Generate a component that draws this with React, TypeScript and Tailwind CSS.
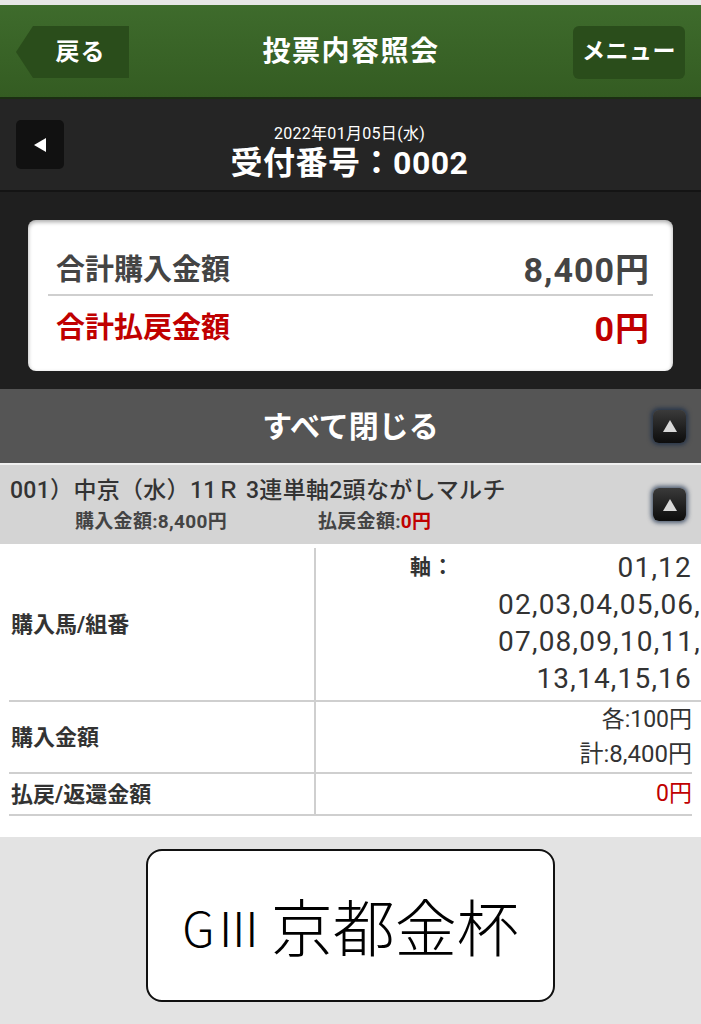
import React from "react";

const jp = "font-['Roboto','Noto_Sans_CJK_JP',sans-serif]";

function UpButton() {
  return (
    <div className="grid h-[33px] w-[33px] place-items-center rounded-[6px] bg-gradient-to-b from-[#3a3a3a] to-[#0d0d0d] shadow-[0_0_4px_2px_rgba(20,40,70,0.7)]">
      <svg width="16" height="14" viewBox="0 0 16 14">
        <path d="M8 1 L15 13 L1 13 Z" fill="#d8d8d8" />
      </svg>
    </div>
  );
}

export default function App() {
  return (
    <div className={`flex w-[701px] flex-col ${jp}`}>
      <div className="h-[5px] bg-[#e6e6e6]" />

      {/* header */}
      <header className="flex h-[94px] items-center justify-between border-b-2 border-[#1b2e12] bg-gradient-to-b from-[#3e6b2c] to-[#345c22] px-[16px] pt-[2px]">
        <button className="flex h-[52px] w-[113px] items-center justify-center bg-[#2a4d1b] pl-[16px] text-[24px] font-bold tracking-[1px] text-white [clip-path:polygon(17px_0,100%_0,100%_100%,17px_100%,0_50%)]">
          戻る
        </button>
        <h1 className="text-[28px] font-bold tracking-[1.5px] text-white">投票内容照会</h1>
        <button className="flex h-[53px] w-[112px] items-center justify-center rounded-[6px] bg-[#2a4d1b] text-[23px] font-bold tracking-[0.5px] text-white">
          メニュー
        </button>
      </header>

      {/* receipt number bar */}
      <div className="flex h-[93px] items-center border-b-2 border-[#141414] bg-[#252525] px-[16px]">
        <div className="grid h-[49px] w-[48px] place-items-center rounded-[5px] bg-[#111]">
          <svg width="14" height="16" viewBox="0 0 14 16">
            <path d="M1 8 L13 1 L13 15 Z" fill="#fff" />
          </svg>
        </div>
        <div className="-ml-[48px] flex flex-1 flex-col items-center pr-[2px] pt-[16px] text-white">
          <div className="text-[16px] leading-[20px] tracking-[0.3px]">2022年01月05日(水)</div>
          <div className="text-[32px] font-bold leading-[38px] tracking-[0.5px]">受付番号：0002</div>
        </div>
      </div>

      {/* totals */}
      <div className="bg-[#1f1f1f] px-[28px] pb-[18px] pt-[28px]">
        <div className="flex h-[151px] flex-col rounded-[8px] bg-white px-[20px] pt-[9px] shadow-[inset_0_2px_4px_rgba(0,0,0,0.35)]">
          <div className="flex h-[67px] items-end justify-between border-b-2 border-[#cfcfcf] pb-[2px] pl-[8px] pr-[3px] text-[29px] font-bold text-[#444]">
            <span>合計購入金額</span>
            <span className="text-[34px] leading-[44px] tracking-[1px]">8,400円</span>
          </div>
          <div className="flex h-[68px] items-center justify-between pb-[2px] pl-[8px] pr-[3px] text-[29px] font-bold text-[#c00000]">
            <span>合計払戻金額</span>
            <span className="text-[34px] tracking-[1px]">0円</span>
          </div>
        </div>
      </div>

      {/* close all */}
      <div className="flex h-[76px] items-center border-b-2 border-[#f0f0f0] bg-[#555] pl-[48px] pr-[15px]">
        <span className="flex-1 text-center text-[30px] font-bold text-white">すべて閉じる</span>
        <UpButton />
      </div>

      {/* item header */}
      <div className="flex h-[79px] items-center bg-[#d4d4d4] pl-[10px] pr-[15px]">
        <div className="flex flex-1 flex-col">
          <div className="text-[23px] font-medium leading-[30px] tracking-[0.3px] text-[#333]">
            001）中京（水）11Ｒ&nbsp;3連単軸2頭ながしマルチ
          </div>
          <div className="mt-[4px] flex text-[19px] font-bold leading-[24px] tracking-[0.3px] text-[#444]">
            <span className="ml-[65px] w-[243px]">購入金額:8,400円</span>
            <span>
              払戻金額:<span className="text-[#c00000]">0円</span>
            </span>
          </div>
        </div>
        <UpButton />
      </div>

      {/* detail table */}
      <div className="bg-white px-[9px] pb-[21px] pt-[4px] text-[#333]">
        <div className="grid grid-cols-[307px_1fr] border-b-2 border-[#cfcfcf]">
          <div className="flex items-center border-b-2 border-r-2 border-[#cfcfcf] pl-[2px] text-[22px] font-bold">
            購入馬/組番
          </div>
          <div className="-mr-[9px] flex flex-col border-b-2 border-[#cfcfcf] pb-[3px] pt-[1px] text-right text-[28px] leading-[37px] tracking-[1.2px]">
            <div className="flex justify-between pl-[94px] pr-[9px]">
              <span className="text-[21px] font-bold">軸：</span>
              <span>01,12</span>
            </div>
            <div>02,03,04,05,06,</div>
            <div>07,08,09,10,11,</div>
            <div className="pr-[9px]">13,14,15,16</div>
          </div>
          <div className="flex items-center border-b-2 border-r-2 border-[#cfcfcf] pl-[2px] text-[22px] font-bold">
            購入金額
          </div>
          <div className="flex flex-col border-b-2 border-[#cfcfcf] text-right text-[23px] leading-[35px]">
            <div>各:100円</div>
            <div className="text-[24px]">計:8,400円</div>
          </div>
          <div className="flex h-[40px] items-center border-r-2 border-[#cfcfcf] pl-[2px] text-[22px] font-bold">
            払戻/返還金額
          </div>
          <div className="flex items-center justify-end text-[23px] text-[#c00000]">0円</div>
        </div>
      </div>

      {/* race banner */}
      <div className="flex h-[190px] justify-center bg-[#e3e3e3] pt-[12px]">
        <div className="flex h-[153px] w-[409px] items-center justify-center rounded-[16px] border-2 border-[#111] bg-white font-['Noto_Sans_CJK_JP',sans-serif] text-[62px] font-light text-black">
          <span className="text-[48px]">GⅢ</span>
          <span className="ml-[8px]">京都金杯</span>
        </div>
      </div>
    </div>
  );
}
